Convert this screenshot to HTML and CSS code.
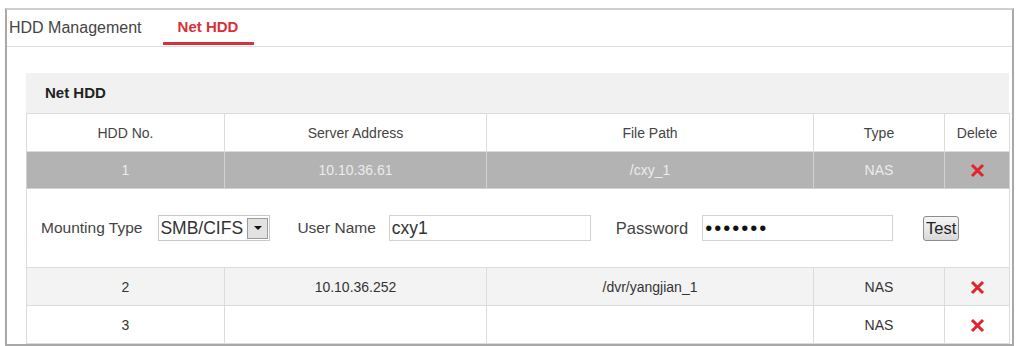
FILE: index.html
```html
<!DOCTYPE html>
<html lang="en">
<head>
  <meta charset="UTF-8">
  <title>Net HDD</title>
  <link rel="stylesheet" href="styles.css">
</head>
<body>
  <div class="frame">
    <div class="tabs">
      <a class="tab" href="#">HDD Management</a>
      <a class="tab active" href="#">Net HDD</a>
    </div>

    <div class="panel">
      <div class="panel-title">Net HDD</div>
      <table class="hdd-table">
        <colgroup>
          <col style="width:198px">
          <col style="width:262px">
          <col style="width:327px">
          <col style="width:131px">
          <col style="width:65px">
        </colgroup>
        <thead>
          <tr>
            <th>HDD No.</th>
            <th>Server Address</th>
            <th>File Path</th>
            <th>Type</th>
            <th>Delete</th>
          </tr>
        </thead>
        <tbody>
          <tr class="selected">
            <td>1</td>
            <td>10.10.36.61</td>
            <td>/cxy_1</td>
            <td>NAS</td>
            <td><span class="del"><svg width="15" height="15" viewBox="0 0 15 15"><path d="M2 2 L13 13 M13 2 L2 13"/></svg></span></td>
          </tr>
          <tr class="form-row">
            <td colspan="5">
              <div class="mount">
                <span class="lbl lbl-type">Mounting Type</span>
                <div class="select">
                  <span class="select-val">SMB/CIFS</span>
                  <span class="select-btn"><i class="caret"></i></span>
                </div>
                <span class="lbl lbl-user">User Name</span>
                <input class="field field-user" type="text" value="cxy1">
                <span class="lbl lbl-pass">Password</span>
                <input class="field field-pass" type="password" value="1234567">
                <button class="test-btn">Test</button>
              </div>
            </td>
          </tr>
          <tr class="alt">
            <td>2</td>
            <td>10.10.36.252</td>
            <td>/dvr/yangjian_1</td>
            <td>NAS</td>
            <td><span class="del"><svg width="15" height="15" viewBox="0 0 15 15"><path d="M2 2 L13 13 M13 2 L2 13"/></svg></span></td>
          </tr>
          <tr>
            <td>3</td>
            <td></td>
            <td></td>
            <td>NAS</td>
            <td><span class="del"><svg width="15" height="15" viewBox="0 0 15 15"><path d="M2 2 L13 13 M13 2 L2 13"/></svg></span></td>
          </tr>
        </tbody>
      </table>
    </div>
  </div>
</body>
</html>
```

FILE: styles.css
```css
body {margin:0; background:#fff; font-family:"Liberation Sans", Arial, sans-serif; color:#333;}

.frame {margin:8px 0 0 5px; width:1005px; border:2px solid #a8a8a8; border-top-color:#cfcfcf; box-sizing:content-box;}

.tabs {display:flex; align-items:flex-end; height:36px; border-bottom:1px solid #dedede;}
.tab {display:block; height:35px; line-height:35px; margin-bottom:1px; text-decoration:none; color:#444; font-size:16px; box-sizing:border-box;}
.tab:first-child {padding-left:2px; margin-right:21px;}
.tab.active {width:91px; text-align:center; color:#d6323c; font-weight:bold; font-size:15px; border-bottom:3px solid #d6323c; line-height:33px;}

.panel {margin:26px 3px 0 19px;}
.panel-title {height:40px; line-height:40px; background:#f1f1f1; padding-left:19px; font-weight:bold; font-size:15px; color:#222;}

.hdd-table {width:983px; border-collapse:collapse; table-layout:fixed; font-size:14px;}
.hdd-table th, .hdd-table td {border:1px solid #dcdcdc; text-align:center; padding:0; height:37px;}
.hdd-table th {font-weight:normal; color:#444; background:#fff;}
.hdd-table tr.selected td {background:#b3b3b3; color:#ececec; border-color:#d2d2d2; height:36px;}
.hdd-table tr.alt td {background:#f3f3f3;}
.hdd-table tr.form-row td {height:78px; text-align:left;}

.del {display:inline-block; vertical-align:middle; line-height:0;}
.del path {stroke:#e2222c; stroke-width:3; fill:none;}

.mount {display:flex; align-items:center; padding-left:14px; font-size:15.5px; color:#444;}
.lbl-user {margin-left:27px;}
.lbl-pass {margin-left:25px; font-size:16.5px;}

.select {display:flex; align-items:center; justify-content:space-between; margin-left:16px; width:112px; height:26px; border:1px solid #c8c8c8; box-sizing:border-box; padding:0 1px 0 1px; font-size:17.5px; color:#333;}
.select-btn {display:flex; align-items:center; justify-content:center; width:21px; height:21px; border:1px solid #9a9a9a; background:#e2e2e2; box-sizing:border-box;}
.caret {width:0; height:0; border-left:4px solid transparent; border-right:4px solid transparent; border-top:4px solid #111;}

.field {height:26px; border:1px solid #d2d2d2; box-sizing:border-box; padding:0 2px; font-family:"Liberation Sans", Arial, sans-serif; font-size:17.5px; color:#333; outline:none;}
.field-user {width:202px; margin-left:13px;}
.field-pass {width:191px; margin-left:14px; font-size:20px; letter-spacing:2px; color:#111;}

.test-btn {margin-left:30px; width:36px; height:25px; padding:0; border:1px solid #8c8c8c; border-radius:3px; background:linear-gradient(#f6f6f6, #d9d9d9); font-family:"Liberation Sans", Arial, sans-serif; font-size:16.5px; color:#222;}
```
